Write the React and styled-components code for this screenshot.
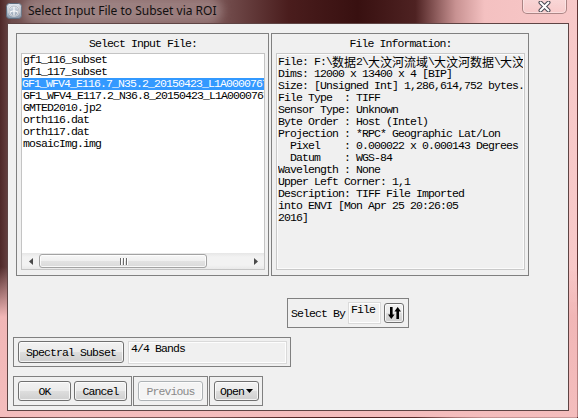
import React from 'react';
import styled, { createGlobalStyle } from 'styled-components';

const mono = '"Liberation Mono", monospace';

const GlobalStyle = createGlobalStyle`
  html, body {
    margin: 0;
    padding: 0;
    overflow: hidden;
    background: #f3c0c0;
  }
`;

/* ---------- window chrome ---------- */

const Window = styled.div`
  width: 578px;
  height: 418px;
  box-sizing: border-box;
  display: flex;
  flex-direction: column;
  border-right: 1px solid rgba(110, 60, 60, 0.45);
  border-bottom: 1px solid rgba(110, 60, 60, 0.35);
  background:
    linear-gradient(180deg, rgba(243, 186, 186, 0) 0, rgba(243, 186, 186, 0) 64%, #f1b6b6 76%, #f4bdbd 100%),
    linear-gradient(90deg, #4e2828 0%, #6e4c4c 2%, #8a6c6c 12%, #7e5a5a 36%, #4a1d1d 50%, #381010 62%, #4e2222 72%, #c89292 79%, #f4c1c1 84%, #f8c8c8 100%);
`;

const TitleBar = styled.div`
  height: 23px;
  flex: none;
  display: flex;
  align-items: flex-start;
`;

const AppIcon = styled.svg`
  width: 16px;
  height: 16px;
  margin: 3px 0 0 6px;
  flex: none;
`;

const Caption = styled.span`
  margin: 3px 0 0 6px;
  font: 12px "Noto Sans", "Open Sans", sans-serif;
  line-height: 15px;
  color: #121010;
  background: rgba(190, 170, 170, 0.4);
  border-radius: 8px;
  box-shadow: 0 0 9px 6px rgba(190, 170, 170, 0.4);
`;

const CloseButton = styled.div`
  margin: -1px 10px 0 auto;
  width: 45px;
  height: 15px;
  box-sizing: border-box;
  border: 1px solid rgba(120, 80, 80, 0.6);
  border-top: none;
  border-radius: 0 0 5px 5px;
  background: linear-gradient(180deg, rgba(255, 255, 255, 0.3), rgba(255, 255, 255, 0.08));
  box-shadow: inset 0 0 0 1px rgba(255, 255, 255, 0.35);
  display: flex;
  align-items: center;
  justify-content: center;
`;

const Client = styled.div`
  flex: 1;
  margin: 0 8px 6px 7px;
  background: #f0f0f0;
  border: 1px solid #5e4444;
  padding: 9px 0 0 5px;
  display: flex;
  flex-direction: column;
  align-items: flex-start;
  font-family: ${mono};
  font-size: 11.5px;
  letter-spacing: -0.9px;
  color: #000;
`;

/* ---------- group boxes ---------- */

const Group = styled.div`
  box-sizing: border-box;
  width: ${(p) => p.$w}px;
  height: ${(p) => p.$h}px;
  border: 1px solid #808080;
  flex: none;
`;

const PanelRow = styled.div`
  display: flex;
  gap: 2px;
  margin-left: 3px;
`;

const Panel = styled(Group)`
  display: flex;
  flex-direction: column;
  padding: 0 3px 5px 4px;
`;

const PanelTitle = styled.div`
  height: 19px;
  line-height: 19px;
  text-align: center;
  white-space: pre;
`;

const ListBox = styled.div`
  flex: 1;
  display: flex;
  flex-direction: column;
  background: #fff;
  border: 1px solid #c4c4c4;
  overflow: hidden;
`;

const ListRows = styled.div`
  flex: 1;
`;

const ListRow = styled.div`
  height: 12px;
  line-height: 12px;
  padding-left: ${(p) => (p.$selected ? 0 : 1)}px;
  white-space: pre;
  overflow: hidden;
  background: ${(p) => (p.$selected ? '#3399ff' : 'transparent')};
  color: ${(p) => (p.$selected ? '#fff' : '#000')};
`;

const HScroll = styled.div`
  height: 16px;
  flex: none;
  display: flex;
  background: linear-gradient(180deg, #e6e6e6 0%, #f2f2f2 25%, #f2f2f2 75%, #e9e9e9 100%);
`;

const ScrollArrow = styled.div`
  width: 17px;
  flex: none;
  display: flex;
  align-items: center;
  justify-content: center;
`;

const Track = styled.div`
  flex: 1;
`;

const Thumb = styled.div`
  width: 168px;
  box-sizing: border-box;
  margin: 1px 0;
  border: 1px solid #a3a3a3;
  border-radius: 3px;
  background: linear-gradient(180deg, #f7f7f7 0%, #efefef 48%, #e2e2e2 52%, #dadada 100%);
  box-shadow: inset 0 0 0 1px rgba(255, 255, 255, 0.8);
  display: flex;
  align-items: center;
  justify-content: center;
`;

const Grip = styled.span`
  width: 1px;
  height: 7px;
  background: #6a6a6a;
  box-shadow: 1px 0 0 #fff;
  margin: 0 1px;
`;

const InfoBox = styled.div`
  flex: 1;
  border: 1px solid #c9c9c9;
  box-shadow: inset 0 0 0 1px #fbfbfb;
  padding: 2px 1px;
  overflow: hidden;
`;

const InfoLine = styled.div`
  height: 12px;
  line-height: 12px;
  white-space: pre;
  overflow: hidden;
`;

const Han = styled.span`
  display: inline-block;
  vertical-align: top;
  height: 12px;
  font-family: "Noto Sans CJK SC", sans-serif;
  font-size: 12px;
  letter-spacing: 0;
  line-height: 12px;
`;

/* ---------- controls ---------- */

const SelectByBox = styled(Group)`
  margin: 22px 0 0 274px;
  display: flex;
  align-items: center;
  padding-left: 3px;
`;

const Field = styled.div`
  box-sizing: border-box;
  width: ${(p) => p.$w}px;
  height: ${(p) => p.$h}px;
  margin-left: ${(p) => p.$gap || 0}px;
  border: 1px solid #dadada;
  box-shadow: inset 0 0 0 1px #fdfdfd;
  padding: 1px 0 0 2px;
  line-height: 12px;
  white-space: pre;
  flex: none;
`;

const ToolRow = styled(Group)`
  margin-top: ${(p) => (p.$flush ? 0 : 9)}px;
  display: flex;
  align-items: center;
  padding-left: 4px;
`;

const ButtonRow = styled.div`
  margin-top: 9px;
  display: flex;
  gap: 1px;
`;

const Button = styled.div`
  box-sizing: border-box;
  width: ${(p) => p.$w}px;
  height: ${(p) => p.$h || 20}px;
  margin-left: ${(p) => p.$gap || 0}px;
  flex: none;
  display: flex;
  align-items: center;
  justify-content: center;
  gap: 2px;
  border: 1px solid ${(p) => (p.$disabled ? '#adb2b5' : '#707070')};
  border-radius: 3px;
  background: ${(p) =>
    p.$disabled
      ? '#f4f4f4'
      : 'linear-gradient(180deg, #f2f2f2 0%, #ebebeb 48%, #dddddd 52%, #cfcfcf 100%)'};
  box-shadow: inset 0 0 0 1px rgba(255, 255, 255, 0.75);
  color: ${(p) => (p.$disabled ? '#8a8a8a' : '#000')};
  white-space: pre;
`;

const files = [
  'gf1_116_subset',
  'gf1_117_subset',
  'GF1_WFV4_E116.7_N35.2_20150423_L1A0000767526',
  'GF1_WFV4_E117.2_N36.8_20150423_L1A0000767527',
  'GMTED2010.jp2',
  'orth116.dat',
  'orth117.dat',
  'mosaicImg.img',
];

const info = [
  ['File: F:\\', <Han key="a">数据</Han>, '2\\', <Han key="b">大汶河流域</Han>, '\\', <Han key="c">大汶河数据</Han>, '\\', <Han key="d">大汶</Han>],
  ['Dims: 12000 x 13400 x 4 [BIP]'],
  ['Size: [Unsigned Int] 1,286,614,752 bytes.'],
  ['File Type  : TIFF'],
  ['Sensor Type: Unknown'],
  ['Byte Order : Host (Intel)'],
  ['Projection : *RPC* Geographic Lat/Lon'],
  ['  Pixel    : 0.000022 x 0.000143 Degrees'],
  ['  Datum    : WGS-84'],
  ['Wavelength : None'],
  ['Upper Left Corner: 1,1'],
  ['Description: TIFF File Imported'],
  ['into ENVI [Mon Apr 25 20:26:05'],
  ['2016]'],
];

const Arrow = ({ dir }) => (
  <svg width="4" height="7" viewBox="0 0 4 7">
    <polygon points={dir === 'left' ? '4,0 4,7 0,3.5' : '0,0 0,7 4,3.5'} fill="#4a4a4a" />
  </svg>
);

export default function App() {
  return (
    <>
      <GlobalStyle />
      <Window>
        <TitleBar>
          <AppIcon viewBox="0 0 16 16">
            <defs>
              <linearGradient id="iconFill" x1="0" y1="0" x2="0" y2="1">
                <stop offset="0" stopColor="#e4eaf2" />
                <stop offset="1" stopColor="#8797aa" />
              </linearGradient>
            </defs>
            <rect x="0.5" y="0.5" width="15" height="15" rx="3" fill="url(#iconFill)" stroke="#5f6d7e" />
            <circle cx="8" cy="8" r="5" fill="none" stroke="#fff" strokeWidth="1.6" />
            <path d="M3.5 9.5 Q8 6 12.5 9.5 M8 3 L8 13" fill="none" stroke="#fff" strokeWidth="1.1" />
            <circle cx="8" cy="8" r="5" fill="none" stroke="#56647a" strokeWidth="0.5" />
          </AppIcon>
          <Caption>Select Input File to Subset via ROI</Caption>
          <CloseButton>
            <svg width="13" height="11" viewBox="0 0 13 11">
              <path d="M2.5 1.5 L10.5 9.5 M10.5 1.5 L2.5 9.5" stroke="#4b4b55" strokeWidth="4" strokeLinecap="round" />
              <path d="M2.5 1.5 L10.5 9.5 M10.5 1.5 L2.5 9.5" stroke="#fff" strokeWidth="2" strokeLinecap="round" />
            </svg>
          </CloseButton>
        </TitleBar>

        <Client>
          <PanelRow>
            <Panel $w={253} $h={243}>
              <PanelTitle>Select Input File:</PanelTitle>
              <ListBox>
                <ListRows>
                  {files.map((name, i) => (
                    <ListRow key={name} $selected={i === 2}>
                      {name}
                    </ListRow>
                  ))}
                </ListRows>
                <HScroll>
                  <ScrollArrow>
                    <Arrow dir="left" />
                  </ScrollArrow>
                  <Thumb>
                    <Grip />
                    <Grip />
                    <Grip />
                  </Thumb>
                  <Track />
                  <ScrollArrow>
                    <Arrow dir="right" />
                  </ScrollArrow>
                </HScroll>
              </ListBox>
            </Panel>

            <Panel $w={258} $h={243}>
              <PanelTitle>File Information:</PanelTitle>
              <InfoBox>
                {info.map((parts, i) => (
                  <InfoLine key={i}>{parts}</InfoLine>
                ))}
              </InfoBox>
            </Panel>
          </PanelRow>

          <SelectByBox $w={122} $h={30}>
            Select By
            <Field $w={33} $h={22} $gap={3}>
              File
            </Field>
            <Button $w={20} $h={20} $gap={3}>
              <svg width="13" height="12" viewBox="0 0 13 12">
                <polygon points="2,0 4.6,0 4.6,7.5 6.6,7.5 3.3,12 0,7.5 2,7.5" fill="#000" />
                <polygon points="8.4,12 11,12 11,4.5 13,4.5 9.7,0 6.4,4.5 8.4,4.5" fill="#000" />
              </svg>
            </Button>
          </SelectByBox>

          <ToolRow $w={278} $h={30}>
            <Button $w={106} $h={22}>
              Spectral Subset
            </Button>
            <Field $w={159} $h={23} $gap={4}>
              4/4 Bands
            </Field>
          </ToolRow>

          <ButtonRow>
            <ToolRow $w={119} $h={30} $flush>
              <Button $w={53}>OK</Button>
              <Button $w={53} $gap={3}>
                Cancel
              </Button>
            </ToolRow>
            <ToolRow $w={75} $h={30} $flush>
              <Button $w={65} $disabled>
                Previous
              </Button>
            </ToolRow>
            <ToolRow $w={54} $h={30} $flush>
              <Button $w={45}>
                Open
                <svg width="7" height="4" viewBox="0 0 7 4">
                  <polygon points="0,0 7,0 3.5,4" fill="#000" />
                </svg>
              </Button>
            </ToolRow>
          </ButtonRow>
        </Client>
      </Window>
    </>
  );
}
